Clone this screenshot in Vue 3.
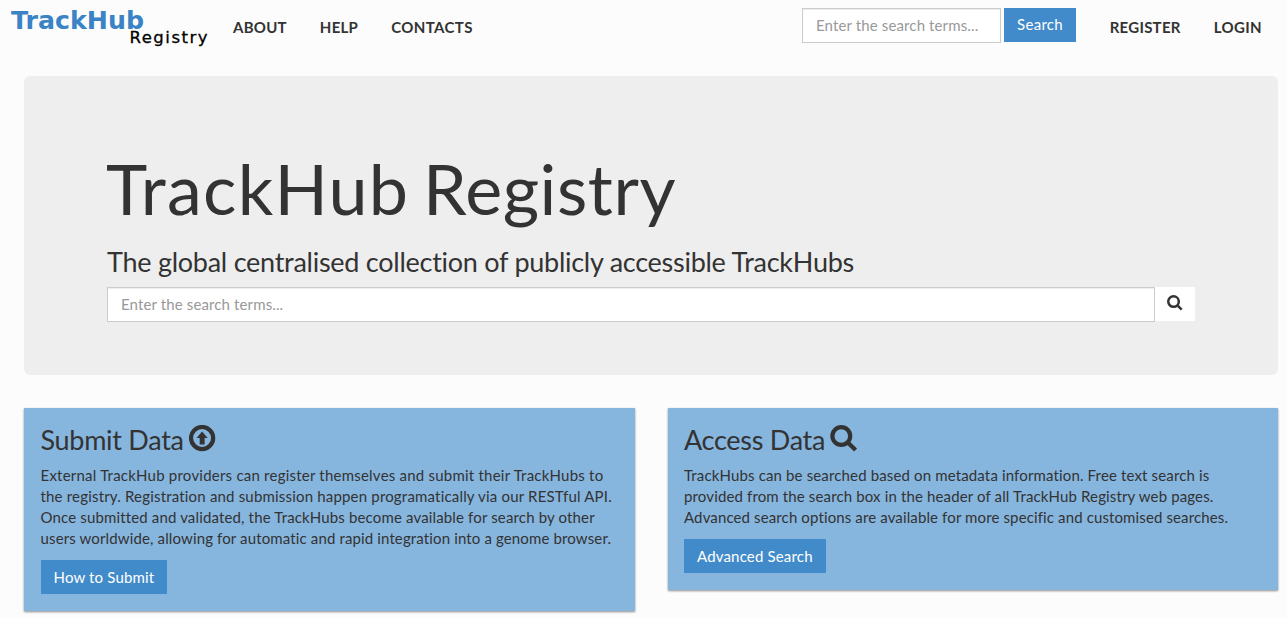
<script setup>
const leftLinks = ['About', 'Help', 'Contacts']
const rightLinks = ['Register', 'Login']
const panels = [
  {
    title: 'Submit Data',
    icon: 'upload',
    lines: [
      { text: 'External TrackHub providers can register themselves and submit their TrackHubs to', tracking: 0.225 },
      { text: 'the registry. Registration and submission happen programatically via our RESTful API.', tracking: 0.185 },
      { text: 'Once submitted and validated, the TrackHubs become available for search by other', tracking: 0.15 },
      { text: 'users worldwide, allowing for automatic and rapid integration into a genome browser.', tracking: 0.135 }
    ],
    action: 'How to Submit'
  },
  {
    title: 'Access Data',
    icon: 'search',
    lines: [
      { text: 'TrackHubs can be searched based on metadata information. Free text search is', tracking: 0.145 },
      { text: 'provided from the search box in the header of all TrackHub Registry web pages.', tracking: 0.14 },
      { text: 'Advanced search options are available for more specific and customised searches.', tracking: 0.125 }
    ],
    action: 'Advanced Search'
  }
]
</script>

<template>
  <div class="page">
    <header class="navbar">
      <svg class="logo" width="210" height="54" viewBox="0 0 210 54" role="img" aria-label="TrackHub Registry">
        <text class="logo-main" x="11" y="28.7" textLength="133" lengthAdjust="spacingAndGlyphs">TrackHub</text>
        <text class="logo-sub" x="129.5" y="43.3" textLength="78">Registry</text>
      </svg>
      <nav class="links">
        <a v-for="l in leftLinks" :key="l">{{ l }}</a>
      </nav>
      <form class="nav-search" @submit.prevent>
        <input class="field" type="text" placeholder="Enter the search terms..." />
        <button class="btn">Search</button>
      </form>
      <nav class="links account">
        <a v-for="l in rightLinks" :key="l">{{ l }}</a>
      </nav>
    </header>

    <section class="hero">
      <h1><span class="brand">TrackHub</span> Registry</h1>
      <h2>The global centralised collection of publicly accessible TrackHubs</h2>
      <form class="hero-search" @submit.prevent>
        <input class="field" type="text" placeholder="Enter the search terms..." />
        <button class="icon-btn" aria-label="Search">
          <svg width="16" height="16" viewBox="0 0 27 27">
            <circle cx="11" cy="11" r="8.9" />
            <path d="M17.2 17.2 24.8 24.8" />
          </svg>
        </button>
      </form>
    </section>

    <main class="panels">
      <article v-for="p in panels" :key="p.title" class="panel">
        <h3>
          <span>{{ p.title }}</span>
          <svg v-if="p.icon === 'upload'" width="27" height="27" viewBox="0 0 27 27">
            <circle cx="13.1" cy="13" r="11.1" />
            <path class="solid" d="M13.1 6.6 18.7 13H15.6V19.6H10.7V13H7.6Z" />
          </svg>
          <svg v-else width="28" height="27" viewBox="0 0 28 27">
            <circle cx="11.3" cy="11" r="8.9" />
            <path d="M17.5 17.2 25.6 25" />
          </svg>
        </h3>
        <p>
          <span v-for="line in p.lines" :key="line.text" :style="{ letterSpacing: line.tracking + 'px' }">{{ line.text }}</span>
        </p>
        <button class="btn">{{ p.action }}</button>
      </article>
    </main>
  </div>
</template>

<style>
body {
  background: #fcfcfc;
  overflow: hidden;
}
</style>

<style scoped>
.page {
  box-sizing: border-box;
  width: 1287px;
  height: 618px;
  overflow: hidden;
  background: #fcfcfc;
  color: #333;
  font: 15px/21px Lato, "Liberation Sans", sans-serif;
  font-variant-ligatures: none;
}
.page * {
  box-sizing: border-box;
}
.navbar {
  display: flex;
  height: 76px;
  align-items: flex-start;
}
.logo {
  flex: none;
}
.logo-main {
  font: bold 25px "DejaVu Sans", sans-serif;
  fill: #3a83c4;
}
.logo-sub {
  font: 16.5px "DejaVu Sans", sans-serif;
  fill: #000;
  stroke: #000;
  stroke-width: 0.3;
}
.links {
  display: flex;
  gap: 33px;
  padding: 17px 0 0 23px;
  font-weight: bold;
  letter-spacing: 0.26px;
  text-transform: uppercase;
}
.links a:last-child {
  letter-spacing: 0.38px;
}
.nav-search {
  display: flex;
  gap: 3px;
  margin-left: auto;
  padding-top: 8px;
}
.account {
  padding-left: 33.7px;
  padding-right: 25px;
}
.field {
  height: 35px;
  padding: 0 13px 2px;
  border: 1px solid #ccc;
  border-radius: 0;
  background: #fff;
  box-shadow: inset 0 1px 1px rgba(0, 0, 0, 0.075);
  font: inherit;
  letter-spacing: 0.13px;
  outline: none;
}
.field::placeholder {
  color: #999;
  opacity: 1;
}
.nav-search .field {
  width: 199px;
}
.btn {
  display: block;
  height: 34px;
  padding: 0 13px;
  border: 0;
  background: #428bca;
  color: #fff;
  font: inherit;
  letter-spacing: 0.17px;
}
.nav-search .btn {
  width: 72px;
  padding-bottom: 2px;
  letter-spacing: 0.3px;
}
.hero {
  height: 299px;
  margin: 0 9px 0 24px;
  padding: 70px 83px 0;
  border-radius: 6px;
  background: #eee;
}
h1,
h2,
h3 {
  margin: 0;
  font-weight: normal;
  white-space: nowrap;
}
h1 {
  margin-left: -1px;
  font-size: 70px;
  line-height: 84px;
  letter-spacing: 0.53px;
  word-spacing: -4.6px;
}
.brand {
  letter-spacing: 1.23px;
}
h2 {
  height: 57px;
  padding-top: 17px;
  font-size: 27px;
  line-height: 30px;
  letter-spacing: -0.26px;
}
.hero-search {
  display: flex;
}
.hero-search .field {
  width: 1048px;
}
.icon-btn {
  display: flex;
  width: 40px;
  height: 34px;
  padding: 7.5px 0 0 11.5px;
  border: 0;
  background: #fff;
}
svg circle,
svg path {
  fill: none;
  stroke: #333;
  stroke-width: 4.2;
}
svg .solid {
  fill: #333;
  stroke: none;
}
.panels {
  display: grid;
  grid-template-columns: 611px 610px;
  gap: 33px;
  align-items: start;
  margin: 33px 0 0 24px;
}
.panel {
  padding: 17px 16px 17px 16.5px;
  background: #86b5de;
  box-shadow: 0 1px 2px rgba(0, 0, 0, 0.45);
}
.panel:last-child {
  padding-left: 16px;
}
h3 {
  display: flex;
  gap: 5px;
  height: 40px;
  font-size: 27px;
  line-height: 30px;
  letter-spacing: -0.29px;
}
p {
  margin: 0 0 11px;
}
p span {
  display: block;
  white-space: nowrap;
}
</style>
